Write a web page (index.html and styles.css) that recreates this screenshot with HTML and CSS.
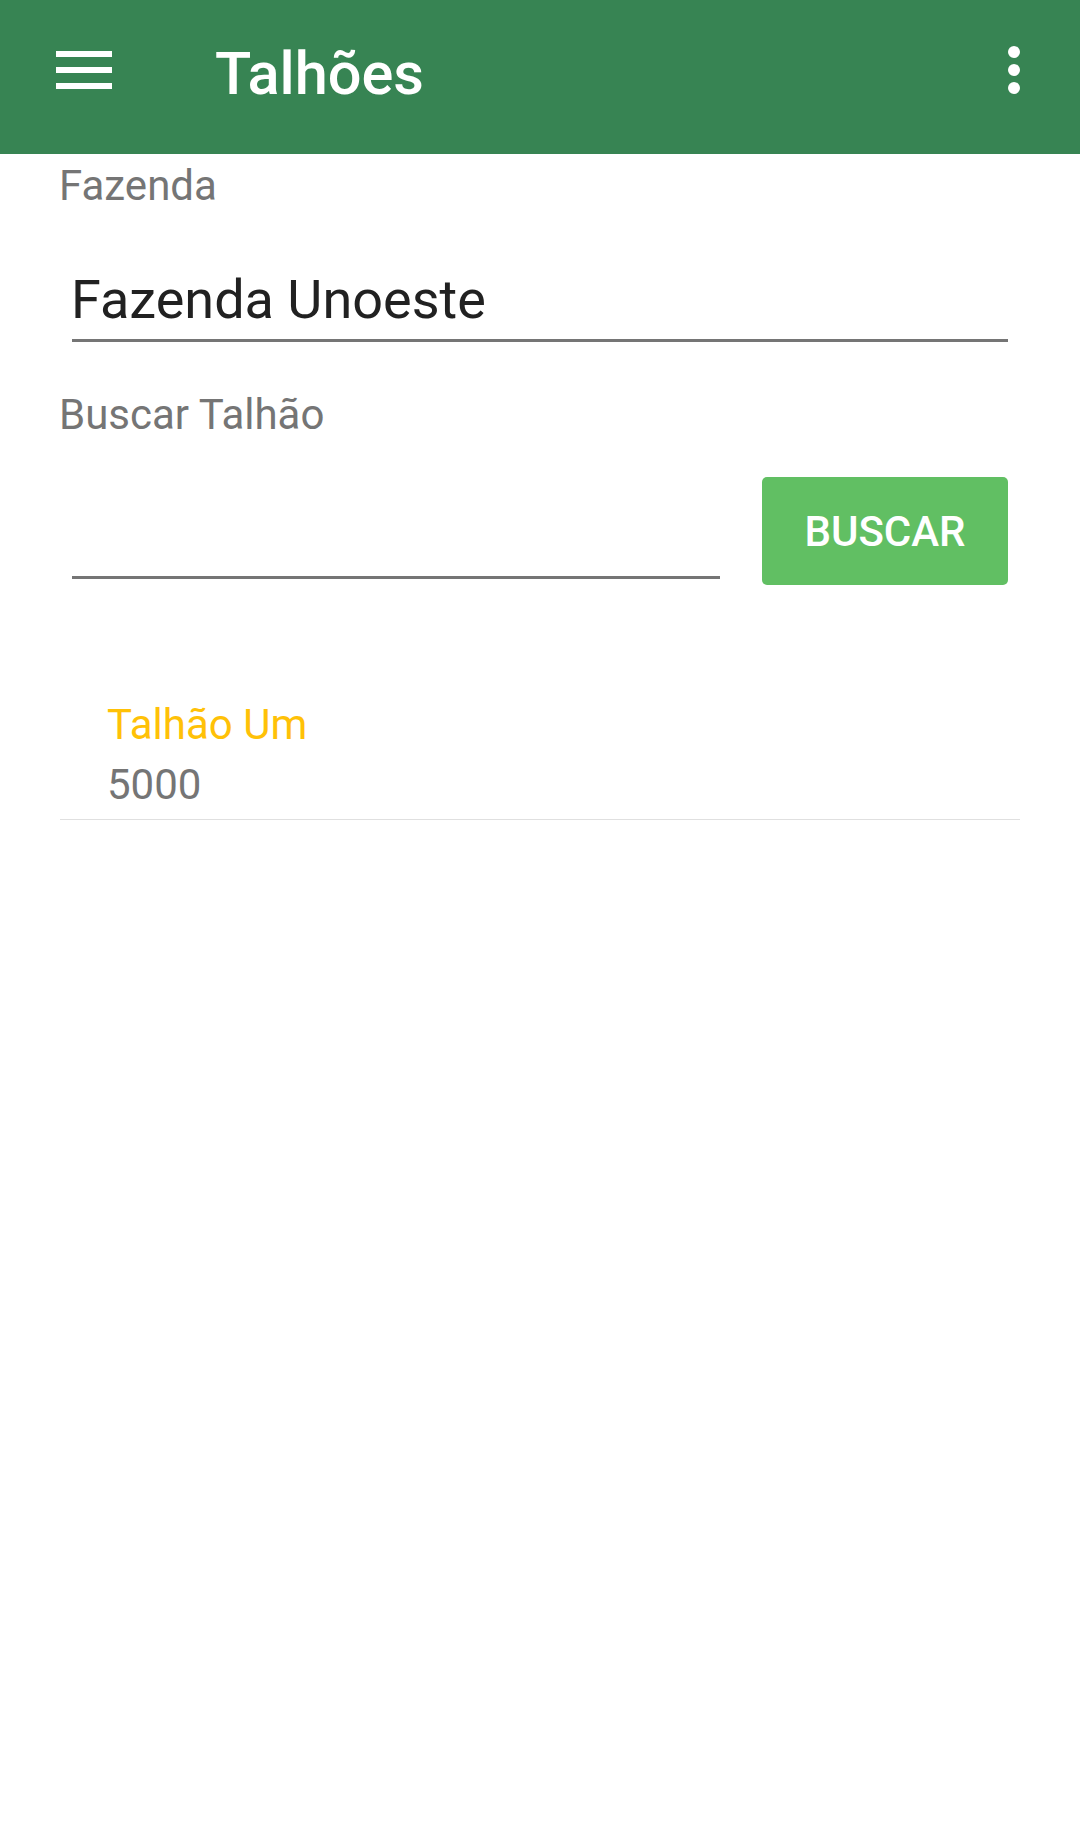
FILE: index.html
```html
<!DOCTYPE html>
<html lang="pt">
<head>
<meta charset="utf-8">
<title>Talhões</title>
<link rel="stylesheet" href="styles.css">
</head>
<body>
  <header class="toolbar">
    <svg class="menu-icon" width="56" height="38" viewBox="0 0 56 38" aria-hidden="true">
      <rect x="0" y="0" width="56" height="6" fill="#fff"/>
      <rect x="0" y="16" width="56" height="6" fill="#fff"/>
      <rect x="0" y="32" width="56" height="6" fill="#fff"/>
    </svg>
    <h1 class="title">Talhões</h1>
    <svg class="more-icon" width="12" height="48" viewBox="0 0 12 48" aria-hidden="true">
      <circle cx="6" cy="6" r="6" fill="#fff"/>
      <circle cx="6" cy="24" r="6" fill="#fff"/>
      <circle cx="6" cy="42" r="6" fill="#fff"/>
    </svg>
  </header>

  <main class="content">
    <div class="label">Fazenda</div>
    <div class="field field-farm"><span class="field-text">Fazenda Unoeste</span></div>

    <div class="label label-search">Buscar Talhão</div>
    <div class="search-row">
      <div class="field field-search"></div>
      <div class="btn">BUSCAR</div>
    </div>

    <ul class="list">
      <li class="list-item">
        <div class="item-title">Talhão Um</div>
        <div class="item-sub">5000</div>
      </li>
    </ul>
  </main>
</body>
</html>
```

FILE: styles.css
```css
* {
  box-sizing: border-box;
}

html, body {
  margin: 0;
  padding: 0;
  background: #ffffff;
}

body {
  width: 1080px;
  height: 1835px;
  font-family: Roboto, "Noto Sans", "Liberation Sans", sans-serif;
  overflow: hidden;
}

.toolbar {
  height: 154px;
  background: #378453;
  display: flex;
  align-items: center;
  padding: 0 60px 14px 56px;
}

.menu-icon {
  display: block;
  flex: none;
}

.title {
  margin: 0 0 0 103px;
  padding-top: 8px;
  font-size: 59.5px;
  line-height: 61px;
  font-weight: 500;
  color: #ffffff;
  flex: 1;
}

.more-icon {
  display: block;
  flex: none;
}

.content {
  padding: 7px 72px 0 59px;
}

.label {
  font-size: 42px;
  line-height: 50px;
  color: #757575;
}

.label-search {
  margin-top: 48px;
}

.field {
  margin-left: 13px;
  border-bottom: 3px solid #757575;
}

.field-farm {
  margin-top: 57px;
  padding-bottom: 7px;
}

.field-text {
  display: block;
  font-size: 54px;
  line-height: 64px;
  color: #212121;
  text-indent: -1px;
}

.search-row {
  display: flex;
  align-items: flex-start;
  margin-top: 37px;
}

.field-search {
  width: 648px;
  height: 102px;
  flex: none;
}

.btn {
  margin-left: 42px;
  width: 246px;
  height: 108px;
  flex: none;
  background: #61bf63;
  border-radius: 5px;
  color: #ffffff;
  font-size: 42px;
  font-weight: 500;
  display: flex;
  align-items: center;
  justify-content: center;
  padding-top: 2px;
  line-height: 50px;
}

.list {
  list-style: none;
  margin: 110px 0 0 1px;
  padding: 0;
  width: 960px;
}

.list-item {
  padding: 0 0 4px 47px;
  border-bottom: 1px solid #e0e0e0;
}

.item-title {
  font-size: 42px;
  line-height: 60px;
  color: #ffc107;
}

.item-sub {
  font-size: 42px;
  line-height: 60px;
  color: #757575;
}
```
